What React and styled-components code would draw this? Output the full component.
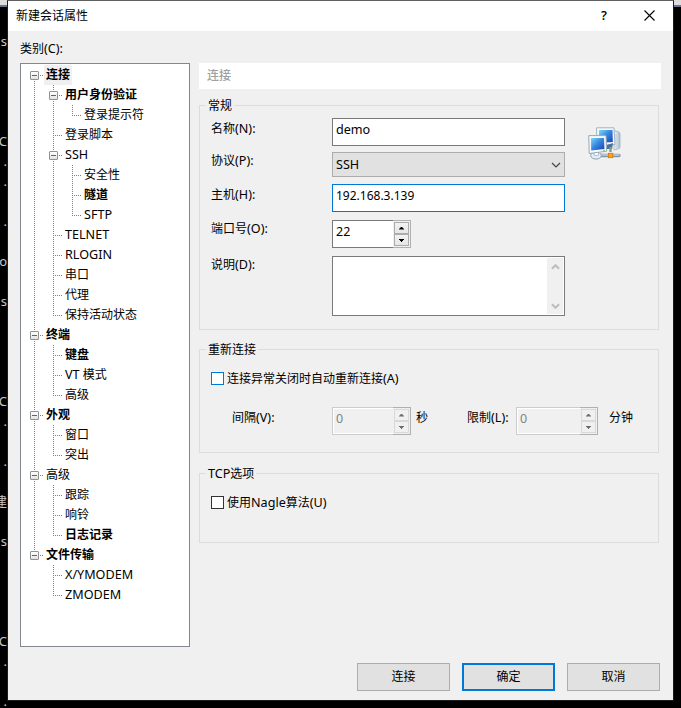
import styled, { createGlobalStyle } from "styled-components";

const GlobalStyle = createGlobalStyle`
    * {
        box-sizing: border-box;
    }
    body {
        margin: 0;
        background-color: #000;
        color: #000;
        font-family: "Noto Sans", "Noto Sans CJK SC", sans-serif;
        font-size: 12px;
        line-height: 16px;
        overflow: hidden;
    }
`

// guides: one letter per indent column
// b = expander box, t = branch, e = last branch, v = line only, n = nothing
// f / l = first and last root box
const tree = [
    { text: '连接', guides: 'f', bold: true, selected: true },
    { text: '用户身份验证', guides: 'vb', bold: true },
    { text: '登录提示符', guides: 'vve' },
    { text: '登录脚本', guides: 'vt' },
    { text: 'SSH', guides: 'vb' },
    { text: '安全性', guides: 'vvt' },
    { text: '隧道', guides: 'vvt', bold: true },
    { text: 'SFTP', guides: 'vve' },
    { text: 'TELNET', guides: 'vt' },
    { text: 'RLOGIN', guides: 'vt' },
    { text: '串口', guides: 'vt' },
    { text: '代理', guides: 'vt' },
    { text: '保持活动状态', guides: 've' },
    { text: '终端', guides: 'b', bold: true },
    { text: '键盘', guides: 'vt', bold: true },
    { text: 'VT 模式', guides: 'vt' },
    { text: '高级', guides: 've' },
    { text: '外观', guides: 'b', bold: true },
    { text: '窗口', guides: 'vt' },
    { text: '突出', guides: 've' },
    { text: '高级', guides: 'b' },
    { text: '跟踪', guides: 'vt' },
    { text: '响铃', guides: 'vt' },
    { text: '日志记录', guides: 've', bold: true },
    { text: '文件传输', guides: 'l', bold: true },
    { text: 'X/YMODEM', guides: 'nt' },
    { text: 'ZMODEM', guides: 'ne' },
]

const terminalLines = [
    's', '', '', '', '', 'C', '.', '.', '', '.', '', 'o', '', 's', '', '', '', '',
    'C', '.', '', '.', '', '建', '', 's', '', '', '', '', 'C', '.', '', '.',
]

const vertical = {
    b: { top: 0, height: 20 },
    t: { top: 0, height: 20 },
    v: { top: 0, height: 20 },
    e: { top: 0, height: 11 },
    f: { top: 10, height: 10 },
    l: { top: 0, height: 10 },
    n: { top: 0, height: 0 },
}

// Latin runs are a little wider than the 12px Chinese glyphs
function Text({ children }) {
    return children.split(/([\x21-\x7e]+)/).map((part, i) => (
        i % 2 ? <Latin key={i}>{part}</Latin> : part
    ))
}

function TreeRow({ item }) {
    return (
        <Row>
            {item.guides.split('').map((kind, i) => (
                <Guide key={i} $line={vertical[kind]} $branch={!'vn'.includes(kind)}>
                    {'bfl'.includes(kind) && <Expander />}
                </Guide>
            ))}
            <RowText $bold={item.bold} $selected={item.selected}>
                <Text>{item.text}</Text>
            </RowText>
        </Row>
    )
}

function Spinner({ value, width, disabled }) {
    return (
        <SpinnerBox $width={width} $disabled={disabled}>
            <SpinnerValue>{value}</SpinnerValue>
            <SpinnerButtons>
                <SpinnerButton $disabled={disabled}><Triangle /></SpinnerButton>
                <SpinnerButton $disabled={disabled}><Triangle $down /></SpinnerButton>
            </SpinnerButtons>
        </SpinnerBox>
    )
}

function NetworkIcon() {
    return (
        <svg width="34" height="34" viewBox="0 0 34 34">
            <defs>
                <linearGradient id="screen" x1="0" y1="0" x2="1" y2="1">
                    <stop offset="0" stopColor="#7fd8f8" />
                    <stop offset=".45" stopColor="#3a8ae0" />
                    <stop offset="1" stopColor="#1440b8" />
                </linearGradient>
                <linearGradient id="tower" x1="0" y1="0" x2="1" y2="0">
                    <stop offset="0" stopColor="#f6fafc" />
                    <stop offset="1" stopColor="#a9bccb" />
                </linearGradient>
            </defs>
            <path d="M26 3.5 L31 5 Q32 5.5 32 7 V20 Q32 21.5 30.5 21.8 L26 23 Z" fill="url(#tower)" stroke="#9fb2c2" strokeWidth=".8" />
            <path d="M28 7 V21 M30 8 V20" stroke="#c0ced9" strokeWidth=".8" />
            <path d="M8.5 .8 H26 L27 17.5 L9 18.5 Z" fill="#f4f8fa" stroke="#a0b4c4" />
            <path d="M11 3 H24.5 L24.8 15 L11 16 Z" fill="url(#screen)" />
            <path d="M19 18 L25 16 L24 22 L19 22 Z" fill="#4b7396" />
            <path d="M22.5 20 V25" stroke="#8298aa" strokeWidth="2.4" />
            <path d="M9 28.5 H31" stroke="#7f97aa" strokeWidth="3.4" strokeLinecap="round" />
            <path d="M9 28 H31" stroke="#e1eaf0" strokeWidth="1.2" strokeLinecap="round" />
            <ellipse cx="8" cy="28.5" rx="5.3" ry="3.6" fill="#e5edf2" stroke="#8ba2b4" />
            <path d="M6 24 H10.5 V28 Q8 29.5 6 28 Z" fill="#fafcfd" stroke="#9db1c1" strokeWidth=".8" />
            <path d="M.8 8.6 H18 L18.6 24.2 L1.2 26.5 Z" fill="#f7fafc" stroke="#93a9ba" />
            <path d="M3 11 H16 L16.4 22 L3.2 23.6 Z" fill="url(#screen)" />
            <path d="M15 23.5 h1.8" stroke="#80d860" strokeWidth="1.4" />
            <rect x="20.4" y="26.3" width="4.4" height="4.4" fill="#ffa414" stroke="#d77a00" strokeWidth=".8" />
        </svg>
    )
}

function Chevron({ color, up, size = 10, weight = 1.2 }) {
    return (
        <svg width={size} height="6" viewBox="0 0 10 6" fill="none" stroke={color} strokeWidth={weight}>
            <path d={up ? 'M1 5 L5 1 L9 5' : 'M1 1 L5 5 L9 1'} />
        </svg>
    )
}

function App() {
    return (
        <Desktop>
            <GlobalStyle />
            <Terminal>
                {terminalLines.map((line, i) => <TerminalLine key={i}>{line}</TerminalLine>)}
            </Terminal>
            <Dialog>
                <TitleBar>
                    <Title>新建会话属性</Title>
                    <HelpButton>?</HelpButton>
                    <svg width="11" height="11" viewBox="0 0 11 11" stroke="#000" strokeWidth="1.1">
                        <path d="M.5 .5 L10.5 10.5 M10.5 .5 L.5 10.5" />
                    </svg>
                </TitleBar>
                <Category><Text>类别(C):</Text></Category>
                <Content>
                    <Tree>
                        {tree.map((item, i) => <TreeRow key={i} item={item} />)}
                    </Tree>
                    <Settings>
                        <PageHeader>连接</PageHeader>
                        <Group $top={16} $height={225}>
                            <Legend>常规</Legend>
                            <General>
                                <div>
                                    <Field $top={4}>
                                        <Label $top={3}><Text>名称(N):</Text></Label>
                                        <TextBox><Text>demo</Text></TextBox>
                                    </Field>
                                    <Field $top={6}>
                                        <Label $top={1}><Text>协议(P):</Text></Label>
                                        <Select>
                                            <Text>SSH</Text>
                                            <Chevron color="#444" />
                                        </Select>
                                    </Field>
                                    <Field $top={7}>
                                        <Label $top={3}><Text>主机(H):</Text></Label>
                                        <TextBox $focused>192.168.3.139</TextBox>
                                    </Field>
                                    <Field $top={8}>
                                        <Label $top={1}><Text>端口号(O):</Text></Label>
                                        <Spinner value="22" width={79} />
                                    </Field>
                                    <Field $top={8}>
                                        <Label $top={1}><Text>说明(D):</Text></Label>
                                        <TextArea>
                                            <ScrollBar>
                                                <Chevron color="#bdbdbd" up size={9} weight={2.2} />
                                                <Chevron color="#bdbdbd" size={9} weight={2.2} />
                                            </ScrollBar>
                                        </TextArea>
                                    </Field>
                                </div>
                                <IconHolder>
                                    <NetworkIcon />
                                </IconHolder>
                            </General>
                        </Group>
                        <Group $top={19} $height={104}>
                            <Legend>重新连接</Legend>
                            <CheckRow>
                                <CheckBox $color="#0078d7" />
                                <CheckText><Text>连接异常关闭时自动重新连接(A)</Text></CheckText>
                            </CheckRow>
                            <IntervalRow>
                                <IntervalLabel $width={100}><Text>间隔(V):</Text></IntervalLabel>
                                <Spinner value="0" width={79} disabled />
                                <IntervalLabel $width={56} $left={5}>秒</IntervalLabel>
                                <IntervalLabel $width={49}><Text>限制(L):</Text></IntervalLabel>
                                <Spinner value="0" width={82} disabled />
                                <IntervalLabel $left={11}>分钟</IntervalLabel>
                            </IntervalRow>
                        </Group>
                        <Group $top={20} $height={70}>
                            <Legend><Text>TCP选项</Text></Legend>
                            <CheckRow>
                                <CheckBox $color="#333" />
                                <CheckText><Text>使用Nagle算法(U)</Text></CheckText>
                            </CheckRow>
                        </Group>
                    </Settings>
                </Content>
                <Buttons>
                    <Button>连接</Button>
                    <Button $primary>确定</Button>
                    <Button>取消</Button>
                </Buttons>
            </Dialog>
        </Desktop>
    )
}

export default App;


const Desktop = styled.div`
    display: flex;
    align-items: flex-start;
    width: 681px;
    height: 708px;
    overflow: hidden;
    background: linear-gradient(#dcdcdc 0 5px, #6b7590 5px 7px, #000 7px);
`

const Terminal = styled.div`
    width: 7px;
    height: 708px;
    padding-top: 32px;
    overflow: hidden;
`

const TerminalLine = styled.div`
    display: flex;
    justify-content: flex-end;
    height: 20px;
    color: #c8c8c8;
    font-size: 13px;
    line-height: 19px;
`

const Dialog = styled.div`
    width: 667px;
    height: 701px;
    border: 1px solid #1c1c1c;
    border-top-color: #606060;
    background-color: #f0f0f0;
`

const TitleBar = styled.div`
    display: flex;
    align-items: center;
    height: 30px;
    padding: 0 18px 2px 8px;
    background-color: #fff;
`

const Title = styled.div`
    flex: 1;
    padding-top: 2px;
`

const HelpButton = styled.div`
    margin-right: 37px;
    font-family: "Open Sans", sans-serif;
    font-size: 13px;
    font-weight: 600;
`

const Category = styled.div`
    height: 32px;
    padding: 10px 0 0 12px;
`

const Latin = styled.span`
    font-size: 12.6px;
`

const Content = styled.div`
    display: flex;
    gap: 9px;
    padding-left: 12px;
`

const Tree = styled.div`
    width: 170px;
    height: 584px;
    padding: 1px 0 0 4px;
    border: 1px solid #828790;
    background-color: #fff;
`

const Row = styled.div`
    display: flex;
    height: 20px;
`

const Guide = styled.div`
    display: flex;
    align-items: center;
    width: 19px;
    height: 20px;
    padding: 1px 0 0 5px;
    background-repeat: no-repeat;
    background-image:
        repeating-linear-gradient(#808080 0 1px, transparent 1px 2px),
        repeating-linear-gradient(to right, #808080 0 1px, transparent 1px 2px);
    background-position: 9px ${({ $line }) => $line.top}px, 9px 10px;
    background-size: 1px ${({ $line }) => $line.height}px, ${({ $branch }) => $branch ? '9px 1px' : '0 0'};
`

const Expander = styled.div`
    width: 9px;
    height: 9px;
    border: 1px solid #919191;
    border-radius: 1px;
    background:
        linear-gradient(#4b63a7, #4b63a7) center / 5px 1px no-repeat,
        linear-gradient(#fff, #e2e2e2);
`

const RowText = styled.div`
    height: 20px;
    padding: 0 2px;
    line-height: 20px;
    white-space: nowrap;
    font-weight: ${({ $bold }) => $bold ? 700 : 400};
    background-color: ${({ $selected }) => $selected ? '#f0f0f0' : 'transparent'};
`

const Settings = styled.div`
    width: 462px;
`

const PageHeader = styled.div`
    height: 26px;
    padding-left: 8px;
    line-height: 26px;
    color: #a0a0a0;
    font-weight: 500;
    background-color: #fff;
`

const Group = styled.div`
    width: 460px;
    height: ${({ $height }) => $height}px;
    margin-top: ${({ $top }) => $top}px;
    padding-left: 11px;
    border: 1px solid #dcdcdc;
`

const Legend = styled.div`
    width: fit-content;
    height: 16px;
    margin: -8px 0 0 -5px;
    padding: 0 2px;
    background-color: #f0f0f0;
`

const General = styled.div`
    display: flex;
`

const Field = styled.div`
    display: flex;
    align-items: flex-start;
    margin-top: ${({ $top }) => $top}px;
`

const Label = styled.div`
    width: 121px;
    padding-top: ${({ $top }) => $top}px;
`

const TextBox = styled.div`
    width: 233px;
    height: 28px;
    padding: 3px;
    border: 1px solid ${({ $focused }) => $focused ? '#0078d7' : '#7a7a7a'};
    background-color: #fff;
`

const Select = styled.div`
    display: flex;
    align-items: center;
    justify-content: space-between;
    width: 233px;
    height: 25px;
    padding: 0 3px;
    border: 1px solid #adadad;
    background-color: #e1e1e1;
`

const TextArea = styled.div`
    display: flex;
    justify-content: flex-end;
    width: 233px;
    height: 60px;
    padding: 1px;
    border: 1px solid #7a7a7a;
    background-color: #fff;
`

const ScrollBar = styled.div`
    display: flex;
    flex-direction: column;
    align-items: center;
    justify-content: space-between;
    width: 16px;
    padding: 6px 0 5px;
    background-color: #f0f0f0;
`

const IconHolder = styled.div`
    padding: 13px 0 0 23px;
`

const SpinnerBox = styled.div`
    display: flex;
    width: ${({ $width }) => $width}px;
    height: 28px;
    border: 1px solid ${({ $disabled }) => $disabled ? '#cccccc' : '#7a7a7a'};
    border-right: 0;
    color: ${({ $disabled }) => $disabled ? '#838383' : '#000'};
    background-color: ${({ $disabled }) => $disabled ? '#f0f0f0' : '#fff'};
    box-shadow: ${({ $disabled }) => $disabled ? 'inset 0 0 0 1px #fff' : 'none'};
`

const SpinnerValue = styled.div`
    flex: 1;
    padding: 3px;
    font-size: 12.5px;
`

const SpinnerButtons = styled.div`
    display: flex;
    flex-direction: column;
    width: 18px;
    height: 28px;
    margin-top: -1px;
    padding: 1px;
    border: 1px solid #b0b0b4;
    border-left: 0;
    background-color: #f0f0f0;
`

const SpinnerButton = styled.div`
    display: flex;
    flex: 1;
    align-items: center;
    justify-content: center;
    width: 15px;
    border: 1px solid ${({ $disabled }) => $disabled ? '#d9d9d9' : '#acacac'};
    color: ${({ $disabled }) => $disabled ? '#6d6d6d' : '#000'};
    background: ${({ $disabled }) => $disabled ? '#f0f0f0' : 'linear-gradient(#f2f2f2, #e6e6e6)'};
`

// stepped edges keep the arrow crisp
const Triangle = styled.div`
    width: 5px;
    height: 3px;
    background-color: currentColor;
    clip-path: polygon(2px 0, 3px 0, 3px 1px, 4px 1px, 4px 2px, 5px 2px, 5px 3px, 0 3px, 0 2px, 1px 2px, 1px 1px, 2px 1px);
    transform: ${({ $down }) => $down ? 'scaleY(-1)' : 'none'};
`

const CheckRow = styled.div`
    display: flex;
    align-items: flex-start;
    gap: 3px;
    height: 18px;
    margin-top: 14px;
`

const CheckBox = styled.div`
    width: 13px;
    height: 13px;
    border: 1px solid ${({ $color }) => $color};
    background-color: #fff;
`

const CheckText = styled.div`
    margin-top: -1px;
`

const IntervalRow = styled.div`
    display: flex;
    margin: 17px 0 0 21px;
`

const IntervalLabel = styled.div`
    width: ${({ $width }) => $width ? `${$width}px` : 'auto'};
    padding: 3px 0 0 ${({ $left }) => $left || 0}px;
    white-space: nowrap;
`

const Buttons = styled.div`
    display: flex;
    justify-content: flex-end;
    gap: 12px;
    padding: 16px 13px 0 0;
`

const Button = styled.div`
    display: flex;
    align-items: center;
    justify-content: center;
    width: 93px;
    height: 28px;
    border: ${({ $primary }) => $primary ? '2px solid #0078d7' : '1px solid #adadad'};
    background-color: #e1e1e1;
`
